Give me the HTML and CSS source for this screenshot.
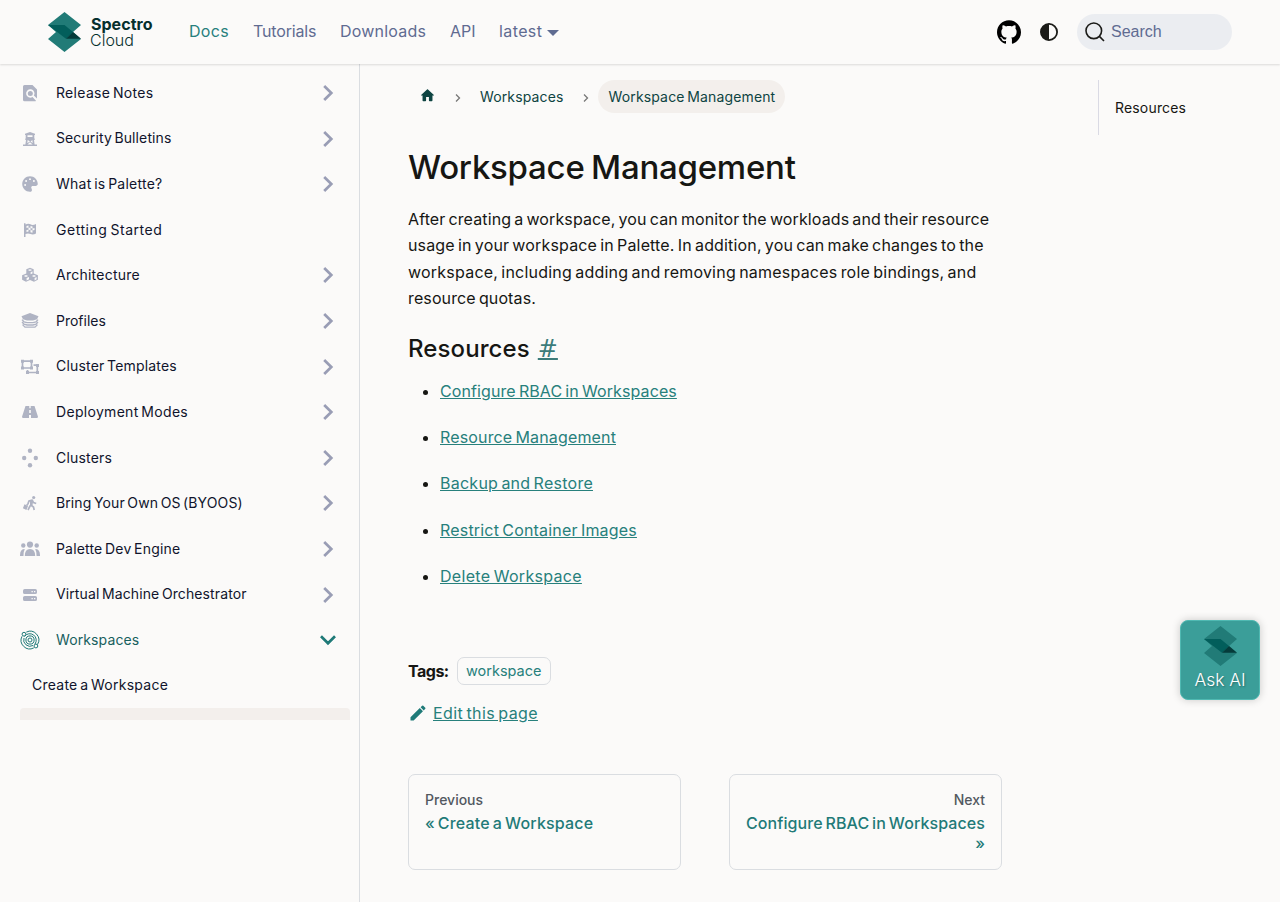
FILE: index.html
```html
<!DOCTYPE html>
<html lang="en">
<head>
<meta charset="utf-8">
<title>Workspace Management</title>
<link rel="stylesheet" href="styles.css">
</head>
<body>
<svg class="defs" width="0" height="0">
  <symbol id="mark" viewBox="0 0 33 40">
    <path fill="#217b77" d="M16.500 0 33 13 25 20 33 27 16.500 40 0 27 8 20 0 13Z"/>
    <path fill="#025e5b" d="M0 13H16.500L25 20 18 26.700Z"/>
    <path fill="#053b3a" d="M25 20 33 26.800H18Z"/>
  </symbol>
  <symbol id="chev" viewBox="0 0 16 16"><path fill="none" stroke="currentColor" stroke-width="2.700" d="M4.200 1 11.300 8 4.200 15"/></symbol>
</svg>
<header class="navbar">
  <a class="logo"><svg class="logo-mark"><use href="#mark"/></svg><span class="logo-text"><b>Spectro</b><i>Cloud</i></span></a>
  <nav class="nav">
    <a class="active n1">Docs</a><a class="n2">Tutorials</a><a class="n3">Downloads</a><a class="n4">API</a><a class="n5">latest</a><span class="caret"></span>
  </nav>
  <svg class="github" viewBox="0 0 24 24"><path d="M12 .297c-6.630 0-12 5.373-12 12 0 5.303 3.438 9.800 8.205 11.385.600.113.820-.258.820-.577 0-.285-.010-1.040-.015-2.040-3.338.724-4.042-1.610-4.042-1.610C4.422 18.070 3.633 17.700 3.633 17.700c-1.087-.744.084-.729.084-.729 1.205.084 1.838 1.236 1.838 1.236 1.070 1.835 2.809 1.305 3.495.998.108-.776.417-1.305.760-1.605-2.665-.300-5.466-1.332-5.466-5.930 0-1.310.465-2.380 1.235-3.220-.135-.303-.540-1.523.105-3.176 0 0 1.005-.322 3.300 1.230.960-.267 1.980-.399 3-.405 1.020.006 2.040.138 3 .405 2.280-1.552 3.285-1.230 3.285-1.230.645 1.653.240 2.873.120 3.176.765.840 1.230 1.910 1.230 3.220 0 4.610-2.805 5.625-5.475 5.920.420.360.810 1.096.810 2.220 0 1.606-.015 2.896-.015 3.286 0 .315.210.690.825.570C20.565 22.092 24 17.592 24 12.297c0-6.627-5.373-12-12-12"/></svg>
  <svg class="theme" viewBox="0 0 18 18"><circle cx="9" cy="9" r="8.100" fill="none" stroke="#1b1b18" stroke-width="1.800"/><path fill="#1b1b18" d="M9 1a8 8 0 0 0 0 16Z"/></svg>
  <div class="search"><svg viewBox="0 0 20 20"><circle cx="8.800" cy="8.800" r="7.800"/><path d="m14.400 14.400 4.600 4.600"/></svg><span>Search</span></div>
</header>
<div class="layout">
  <aside class="sidebar">
    <a class="row t3"><svg class="ic" viewBox="0 0 20 20"><path fill-rule="evenodd" d="M4.500 2H12.500L17 6.500V15.500L13.900 12.600A4.200 4.200 0 1 0 12.500 14L16 17.700Q15.600 18.300 15 18.300H4.500Q3 18.300 3 16.800V3.500Q3 2 4.500 2Z"/><circle cx="10.300" cy="10.500" r="2.500"/></svg><span>Release Notes</span><svg class="ch"><use href="#chev"/></svg></a>
    <a class="row t1"><svg class="ic" viewBox="0 0 20 20"><path fill-rule="evenodd" d="M10 3 15 4.700V6H14.300V9.500H14.700V11H14L14.600 15.600H17V17H3V15.600H5.400L6 11H5.300V9.500H5.700V6H5V4.700ZM7.500 6.300V8H12.500V6.300ZM7.700 11 7.300 14 10 12.400ZM12.300 11 10.500 12.400 12.700 14ZM10 13.300 7.400 15.600H12.600Z"/></svg><span>Security Bulletins</span><svg class="ch"><use href="#chev"/></svg></a>
    <a class="row t25"><svg class="ic" viewBox="-73 -73 658 658"><path d="M512 256c0 .9 0 1.800 0 2.700-.400 36.500-33.600 61.300-70.100 61.300H344c-26.500 0-48 21.500-48 48 0 3.400.400 6.700 1 9.900 2.100 10.200 6.500 20 10.800 29.900 6.100 13.800 12.100 27.500 12.100 42 0 31.800-21.600 60.700-53.400 62-3.500.100-7 .200-10.600.200C114.600 512 0 397.400 0 256S114.600 0 256 0 512 114.600 512 256zM128 288a32 32 0 1 0-64 0 32 32 0 1 0 64 0zm0-96a32 32 0 1 0 0-64 32 32 0 1 0 0 64zM288 96a32 32 0 1 0-64 0 32 32 0 1 0 64 0zm96 96a32 32 0 1 0 0-64 32 32 0 1 0 0 64z"/></svg><span>What is Palette?</span><svg class="ch"><use href="#chev"/></svg></a>
    <a class="row t54"><svg class="ic" viewBox="0 0 20 20"><path fill-rule="evenodd" d="M4 3.200H5.500V4.400Q8.500 3 10.500 4.300T16 4V13.500Q13 15.200 10.500 14T5.500 14V17H4ZM6.500 6V8L8.500 7.500V5.500ZM10.500 6V8L12.500 8.500V6.500ZM8.500 7.500V9.800L10.500 10V8ZM12.500 8.500V10.600L14.500 10V8ZM6.500 10V12L8.500 11.600V9.800ZM10.500 10V12.300L12.500 12.700V10.600Z"/></svg><span>Getting Started</span></a>
    <a class="row t25"><svg class="ic" viewBox="0 0 20 20"><path fill-rule="evenodd" d="M10 2.800 13.700 4.300V8.500L17.900 10.200V14.800L14 16.800 10 15 6 16.800 2.100 14.800V10.200L6.300 8.500V4.300ZM7.800 5 10 6 12.200 5 10 4.200ZM10.600 7.200V9.300L12.500 8.400V6.300ZM3.800 11 6 12 8.200 11 6 10ZM11.800 11 14 12 16.200 11 14 10ZM6.600 13.100V15.400L9 14.200V12ZM14.600 13.100V15.400L16.600 14.200V12Z"/></svg><span>Architecture</span><svg class="ch"><use href="#chev"/></svg></a>
    <a class="row t0"><svg class="ic" viewBox="0 0 20 20"><path d="M10 2 18.500 5.200 17 8.300 13 9.500H7L3 8.300 1.500 5.200Z"/><path class="ln" d="M2 8.600 4 10.800 7 11.600H13L16 10.800 18 8.600M2 11 4 13.200 7 14H13L16 13.200 18 11M2.500 13.600 5 16.200H15L17.500 13.600"/></svg><span>Profiles</span><svg class="ch"><use href="#chev"/></svg></a>
    <a class="row t2"><svg class="ic" viewBox="0 0 20 20"><path class="ln th" d="M2.500 4.200H11.500V11H2.500ZM13.500 8.200H17.300V15.500H7.500V13"/><path d="M1 2.700H4V5.700H1ZM10 2.700H13V5.700H10ZM1 9.500H4V12.500H1ZM10 9.500H13V12.500H10ZM16 7H19V10H16ZM16 14H19V17H16ZM6 14H9V17H6Z"/></svg><span>Cluster Templates</span><svg class="ch"><use href="#chev"/></svg></a>
    <a class="row t3"><svg class="ic" viewBox="0 0 20 20"><path fill-rule="evenodd" d="M5.500 4H14.500L18 14.700Q18 16 16.700 16H3.300Q2 16 2 14.700ZM9.300 4V6.200H10.700V4ZM9.200 8V11H10.800V8ZM9 13V16H11V13Z"/></svg><span>Deployment Modes</span><svg class="ch"><use href="#chev"/></svg></a>
    <a class="row t2"><svg class="ic" viewBox="0 0 20 20"><circle cx="10" cy="2.700" r="2.200"/><circle cx="4.200" cy="10" r="2.200"/><circle cx="15.800" cy="10" r="2.200"/><circle cx="10" cy="17.300" r="2.200"/></svg><span>Clusters</span><svg class="ch"><use href="#chev"/></svg></a>
    <a class="row t1"><svg class="ic" viewBox="0 0 20 20"><circle cx="13.700" cy="4.500" r="1.600"/><path class="ln th" d="M11.500 7.500 10.800 12 13.500 14 14.200 17M10.300 12.500 8 17M8 10.500 9 8 12 7.300 13.500 9.500 16.200 10.500M8.500 10 6.700 12.400"/><path d="M10 7 13.300 6.700 12.500 12.500 10 12ZM4.500 11.200 8 13 6.400 17 2.900 15.300Z"/></svg><span>Bring Your Own OS (BYOOS)</span><svg class="ch"><use href="#chev"/></svg></a>
    <a class="row t2"><svg class="ic" viewBox="0 0 20 20"><circle cx="10" cy="5.600" r="3.100"/><circle cx="3.300" cy="6.500" r="2.200"/><circle cx="16.700" cy="6.500" r="2.200"/><path d="M4.800 17Q4.800 9.900 10 9.900T15.200 17ZM0 17Q-.2 10 4.800 10 3.400 12.500 3.500 17ZM20 17Q20.200 10 15.200 10 16.600 12.500 16.500 17Z"/></svg><span>Palette Dev Engine</span><svg class="ch"><use href="#chev"/></svg></a>
    <a class="row t1"><svg class="ic" viewBox="0 0 20 20"><path fill-rule="evenodd" d="M4.700 4H15.300Q17 4 17 5.700V7.500Q17 9 15.300 9H4.700Q3 9 3 7.500V5.700Q3 4 4.700 4ZM11.500 5.900V7.200H12.800V5.900ZM14 5.900V7.200H15.300V5.900ZM4.700 11H15.300Q17 11 17 12.500V14.500Q17 16 15.300 16H4.700Q3 16 3 14.500V12.500Q3 11 4.700 11ZM11.500 12.900V14.200H12.800V12.900ZM14 12.900V14.200H15.300V12.900Z"/></svg><span>Virtual Machine Orchestrator</span><svg class="ch"><use href="#chev"/></svg></a>
    <a class="row open t1"><svg class="ic" viewBox="0 0 20 20"><g class="ring"><circle cx="10" cy="10" r="2"/><circle cx="10" cy="10" r="4.100"/><path d="M4.500 6.400A6.300 6.300 0 0 1 15 14M13 15.500A6.300 6.300 0 0 1 4 8M6.300 2.100A8.700 8.700 0 0 1 17.500 14.500M13.800 17.900A8.700 8.700 0 0 1 2 6.300"/><circle cx="4" cy="4.200" r="1.900"/><circle cx="15.900" cy="16" r="1.900"/></g></svg><span>Workspaces</span><svg class="ch"><use href="#chev"/></svg></a>
    <a class="row sub t25"><span>Create a Workspace</span></a>
    <a class="row current"></a>
  </aside>
  <main class="main">
    <nav class="crumbs">
      <svg class="home" viewBox="0 0 24 24"><path d="M10 19v-5h4v5c0 .550.450 1 1 1h3c.550 0 1-.450 1-1v-7h1.700c.460 0 .680-.570.330-.870L12.670 3.600c-.380-.340-.960-.340-1.340 0l-8.360 7.530c-.340.300-.130.870.330.870H5v7c0 .550.450 1 1 1h3c.550 0 1-.450 1-1z"/></svg>
      <svg class="sep" viewBox="0 0 6 8"><path d="m1 .5 3.500 3.500L1 7.500"/></svg>
      <span class="c1">Workspaces</span>
      <svg class="sep s2" viewBox="0 0 6 8"><path d="m1 .5 3.500 3.500L1 7.500"/></svg>
      <span class="pill">Workspace Management</span>
    </nav>
    <h1>Workspace Management</h1>
    <p><span class="p1">After creating a workspace, you can monitor the workloads and their resource</span><br><span class="p2">usage in your workspace in Palette. In addition, you can make changes to the</span><br><span class="p3">workspace, including adding and removing namespaces role bindings, and</span><br><span class="p4">resource quotas.</span></p>
    <h2><span>Resources</span><a>#</a></h2>
    <ul>
      <li><a class="l1">Configure RBAC in Workspaces</a></li>
      <li><a class="l2">Resource Management</a></li>
      <li><a class="l3">Backup and Restore</a></li>
      <li><a class="l4">Restrict Container Images</a></li>
      <li><a class="l5">Delete Workspace</a></li>
    </ul>
    <div class="tags"><b>Tags:</b><a>workspace</a></div>
    <div class="edit"><svg viewBox="0 0 40 40"><path d="m34.500 11.700-3 3.100-6.300-6.300 3.100-3q.500-.500 1.200-.500t1.100.500l3.900 3.900q.500.400.500 1.100t-.500 1.200zM5 28.700 23.600 10.100l6.300 6.300L11.300 35H5v-6.300z"/></svg><a>Edit this page</a></div>
    <div class="pager">
      <a class="card"><small>Previous</small><span class="g1">« Create a Workspace</span></a>
      <a class="card next"><small>Next</small><span class="g2">Configure RBAC in Workspaces</span><span>»</span></a>
    </div>
  </main>
  <div class="toc"><span>Resources</span></div>
</div>
<button class="ask"><svg><use href="#mark"/></svg><span>Ask AI</span></button>
</body>
</html>
```
FILE: styles.css
```css
*{box-sizing:border-box}
body{margin:0;width:1280px;height:902px;overflow:hidden;background:#fbfaf9;color:#161613;font:16px/26.4px Inter,sans-serif;word-spacing:-1.500px}
.defs{position:absolute}
.navbar{position:relative;display:flex;align-items:center;height:64px;padding:0 48px;box-shadow:0 1px 2px rgba(0,0,0,.13)}
.logo{display:flex;width:141px;gap:10px}
.logo-mark{width:33px;height:40px}
.logo-text{display:flex;flex-direction:column;color:#062f2d}
.logo b{font-size:16px;font-weight:700;line-height:17px;margin-top:4px;letter-spacing:.030px}
.logo i{font-size:16px;font-style:normal;font-weight:300;line-height:14px;margin-left:-1px}
.nav{display:flex;align-items:center;color:#5f6b91;flex:1;padding-bottom:1px}
.nav a{margin-right:24px;white-space:nowrap}
.nav .active{color:#27807c}
.n1{width:40px;letter-spacing:.300px}
.n2{width:63px;letter-spacing:-.150px}
.n3{width:86px;letter-spacing:.200px}
.n4{width:25px}
.n5{width:43px;letter-spacing:.400px}
.nav .n5{margin-right:5px}
.caret{border:6px solid transparent;border-top-color:currentColor;border-bottom:0;margin-top:2px}
.github{width:24px;height:24px}
.theme{width:18px;height:18px;margin:0 19px}
.search{display:flex;align-items:center;width:155px;height:36px;border-radius:18px;background:#ebedf1;padding-left:8px;color:#5f6b91;font-family:"Liberation Sans",Arial,sans-serif}
.search svg{width:20px;height:20px;margin-right:6px;fill:none;stroke:#1b1b18;stroke-width:1.600}
.layout{display:flex;height:838px}
.sidebar{width:360px;height:838px;border-right:1px solid #dadde1;padding:6.200px 9px 0 20px}
.row{display:flex;align-items:center;height:45.600px;padding-right:14px;font-size:14px;color:#10142c;white-space:nowrap}
.t1{letter-spacing:.110px}
.t2{letter-spacing:.180px}
.t25{letter-spacing:.250px}
.t3{letter-spacing:.310px}
.t54{letter-spacing:.540px}
.ic{width:20px;height:20px;margin-right:16px;fill:#afb3c3}
.ln{fill:none;stroke:#afb3c3;stroke-width:1.300}
.th{stroke-width:1.700}
.ring{fill:none;stroke:#1f7a78;stroke-width:1}
.ch{width:16px;height:16px;margin-left:auto;color:#999db5}
.open{color:#17605e}
.open .ch{transform:rotate(90deg);color:#1f7a78}
.sub{padding-left:12px;height:44.800px}
.current{height:12px;background:#f3efec;border-radius:4px 4px 0 0}
.main{width:594px;margin-left:48px;padding-top:16px}
.crumbs{display:flex;align-items:center;height:33px;font-size:14px;color:#0e4442}
.home{width:17px;height:17px;margin:-3px 19.500px 0 10.500px;fill:#0e4442}
.c1{letter-spacing:.130px;padding-top:1px}
.sep{width:6px;height:8px;fill:none;stroke:#777;stroke-width:1.300;margin-right:19px;margin-top:2px}
.s2{margin:2px 9px 0 20px}
.pill{background:#f3efec;border-radius:17px;width:187px;height:33px;padding:0 10px;line-height:34px;letter-spacing:.150px;white-space:nowrap}
h1{font-size:33px;font-weight:450;line-height:40px;margin:34px 0 19px;white-space:nowrap;word-spacing:-2px;letter-spacing:-.250px}
p{margin:0;white-space:nowrap}
.p1{letter-spacing:.110px}
.p2{letter-spacing:.160px}
.p3{letter-spacing:.220px}
.p4{letter-spacing:.120px}
h2{display:flex;gap:8px;font-size:24px;font-weight:450;line-height:30px;letter-spacing:.100px;margin:22px 0 14px}
h2 a{font-family:"DejaVu Sans",sans-serif;font-weight:400;font-size:24px;letter-spacing:0;color:#3c7c7b;text-decoration:underline;text-decoration-thickness:2px}
ul{margin:0;padding-left:32px}
li{margin-bottom:20px}
li a,.edit a{color:#27807c;text-decoration:underline}
.l1{letter-spacing:.100px}
.l2{letter-spacing:.150px}
.l3{letter-spacing:.250px}
.l4{letter-spacing:.190px}
.l5{letter-spacing:.310px}
.tags{display:flex;align-items:center;gap:8px;margin-top:67px;height:28px}
.tags b{width:41px;letter-spacing:-.500px;padding-top:1px}
.tags a{border:1px solid #dadde1;border-radius:7px;height:28px;padding:0 8px;font-size:14.500px;line-height:26px;color:#27807c}
.edit{display:flex;align-items:center;margin-top:15px;letter-spacing:.380px}
.edit svg{width:20px;height:20px;margin-right:5px;fill:#1f7a78}
.pager{display:grid;grid-template-columns:repeat(2,minmax(0,1fr));gap:48px;margin-top:48px}
.card{display:flex;flex-direction:column;height:96px;border:1px solid #dadde1;border-radius:7px;padding:15px 16px;color:#1f7a78;font-weight:500;line-height:20px;white-space:nowrap}
.card small{font-size:14px;line-height:20px;color:#525860;margin-bottom:3px}
.g1{letter-spacing:.180px}
.g2{letter-spacing:.090px}
.next{align-items:flex-end}
.toc{margin:16px 0 0 96px;height:55px;border-left:1px solid #dadae4;padding:15px 16px;font-size:14px;letter-spacing:.170px}
.ask{position:absolute;left:1180px;top:620px;width:80px;height:80px;border:1px solid #50b9b2;border-radius:8px;background:#3b9e99;box-shadow:0 0 8px rgba(0,0,0,.2);display:flex;flex-direction:column;align-items:center;padding:5px 0 0;color:#fff;font:300 17.500px/28px Inter,sans-serif;letter-spacing:-.100px;text-shadow:1px 1px 2px rgba(0,0,0,.3)}
.ask svg{width:33px;height:40px;flex:none}
```
